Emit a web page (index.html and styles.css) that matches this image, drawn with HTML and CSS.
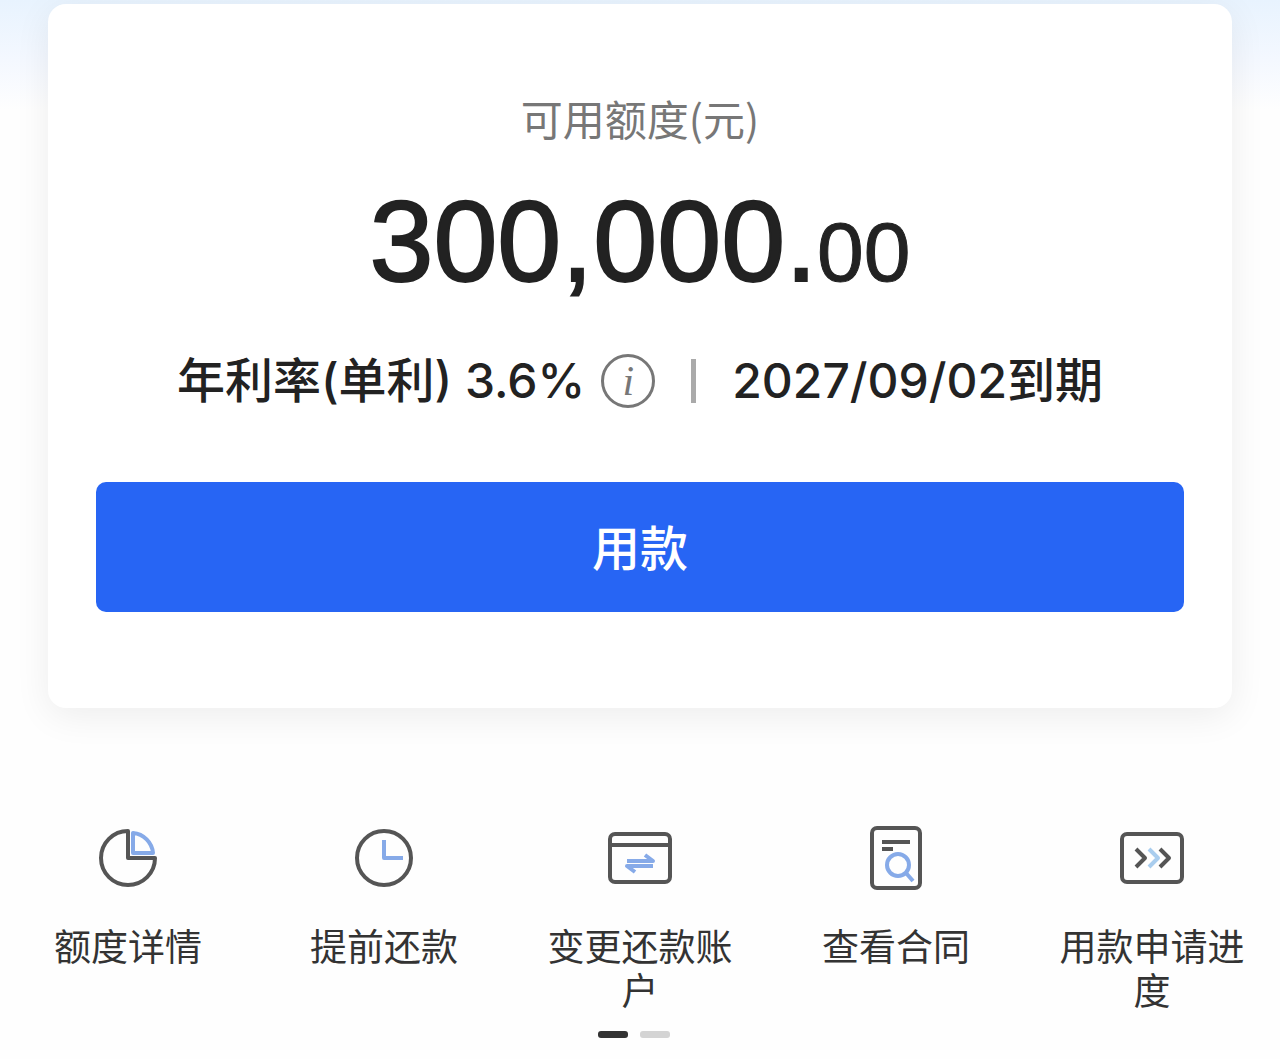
FILE: index.html
```
<!DOCTYPE html>
<html lang="zh-CN">
<head>
    <meta charset="UTF-8">
    <meta name="viewport" content="width=device-width, initial-scale=1.0">
    <title>可用额度</title>
    <link rel="stylesheet" href="styles.css">
</head>
<body>
    <main class="page">
        <section class="card">
            <h1 class="card-title">可用额度(元)</h1>
            <div class="amount">300,000.<span class="cents">00</span></div>
            <div class="rate-row">
                <span>年利率(单利) 3.6%</span>
                <button type="button" class="info" aria-label="利率说明">i</button>
                <span class="divider"></span>
                <span>2027/09/02到期</span>
            </div>
            <button type="button" class="draw-button">用款</button>
        </section>

        <nav class="menu">
            <a href="#" class="menu-item">
                <svg class="icon" viewBox="0 0 72 72">
                    <path class="blue" d="M41 11v20h20A22 22 0 0 0 41 11z"/>
                    <path class="dark" d="M36 9A27 27 0 1 0 63 36H36z"/>
                </svg>
                <span>额度详情</span>
            </a>
            <a href="#" class="menu-item">
                <svg class="icon" viewBox="0 0 72 72">
                    <circle class="dark" cx="36" cy="36" r="27"/>
                    <path class="blue" d="M36 18v18h19"/>
                </svg>
                <span>提前还款</span>
            </a>
            <a href="#" class="menu-item">
                <svg class="icon" viewBox="0 0 72 72">
                    <rect class="dark" x="6" y="12" width="60" height="48" rx="5"/>
                    <path class="dark" d="M6 23h60"/>
                    <path class="blue" d="M23 39h26l-8-6M49 44H23l8 6"/>
                </svg>
                <span>变更还款账户</span>
            </a>
            <a href="#" class="menu-item">
                <svg class="icon" viewBox="0 0 72 72">
                    <rect class="dark" x="12" y="6" width="48" height="60" rx="5"/>
                    <path class="dark" d="M22 20h28M22 27h11"/>
                    <circle class="blue" cx="38" cy="43" r="11"/>
                    <path class="blue" d="M46 51l7 8"/>
                </svg>
                <span>查看合同</span>
            </a>
            <a href="#" class="menu-item">
                <svg class="icon" viewBox="0 0 72 72">
                    <rect class="dark" x="6" y="12" width="60" height="48" rx="5"/>
                    <path class="light" d="M33 27l9 9-9 9"/>
                    <path class="dark" d="M20 27l9 9-9 9M44 27l9 9-9 9"/>
                </svg>
                <span>用款申请进度</span>
            </a>
        </nav>

        <div class="pager">
            <span class="dot active"></span>
            <span class="dot"></span>
        </div>
    </main>
</body>
</html>
```
FILE: styles.css
```
* {
    box-sizing: border-box;
}
body {
    margin: 0;
    font-family: Inter, "Noto Sans CJK SC", sans-serif;
    color: #222;
    background: #fefefe linear-gradient(#e8f3fe, #f4f8ff 60px, #fefefe 110px) no-repeat;
}
.page {
    padding-top: 4px;
}
.card {
    display: flex;
    flex-direction: column;
    align-items: center;
    margin: 0 48px;
    padding: 86px 48px 96px;
    border-radius: 18px;
    background: #fff;
    box-shadow: 0 8px 36px rgba(0, 0, 0, 0.07);
}
.card-title {
    margin: 0;
    font-family: "Noto Sans CJK SC", sans-serif;
    font-size: 42px;
    font-weight: 400;
    line-height: 56px;
    color: #777;
}
.amount {
    margin-top: 27px;
    font-family: "Liberation Sans", Arial, sans-serif;
    font-size: 115px;
    line-height: 136px;
    -webkit-text-stroke: 2px #222;
}
.cents {
    font-size: 84px;
    -webkit-text-stroke: 1px #222;
}
.rate-row {
    display: flex;
    align-items: center;
    margin-top: 28px;
    font-size: 48px;
    font-weight: 500;
    line-height: 66px;
    white-space: nowrap;
}
.info {
    width: 54px;
    height: 54px;
    margin-left: 16px;
    padding: 0;
    border: 3px solid #777;
    border-radius: 50%;
    background: none;
    font-family: "Liberation Serif", serif;
    font-size: 42px;
    font-style: italic;
    line-height: 46px;
    color: #777;
    cursor: pointer;
}
.divider {
    width: 5px;
    height: 44px;
    margin: 0 36px;
    background: #aaa;
}
.draw-button {
    width: 100%;
    height: 130px;
    margin-top: 68px;
    padding: 0 0 4px;
    border: none;
    border-radius: 10px;
    background: #2765f4;
    font-family: inherit;
    font-size: 48px;
    font-weight: 500;
    color: #fff;
    cursor: pointer;
}
.menu {
    display: grid;
    grid-template-columns: repeat(5, 1fr);
    margin-top: 114px;
}
.menu-item {
    display: flex;
    flex-direction: column;
    align-items: center;
    gap: 32px;
    padding: 0 24px;
    font-size: 37px;
    line-height: 44px;
    text-align: center;
    text-decoration: none;
    color: #333;
}
.icon {
    width: 72px;
    height: 72px;
    fill: none;
    stroke-width: 4px;
    stroke-linejoin: round;
}
.dark {
    stroke: #555;
}
.blue {
    stroke: #86aae8;
}
.light {
    stroke: #a9cdee;
}
.pager {
    display: flex;
    justify-content: center;
    gap: 12px;
    padding: 17px 12px 21px 0;
}
.dot {
    width: 30px;
    height: 7px;
    border-radius: 3px;
    background: #d4d4d4;
}
.dot.active {
    background: #333;
}
```
